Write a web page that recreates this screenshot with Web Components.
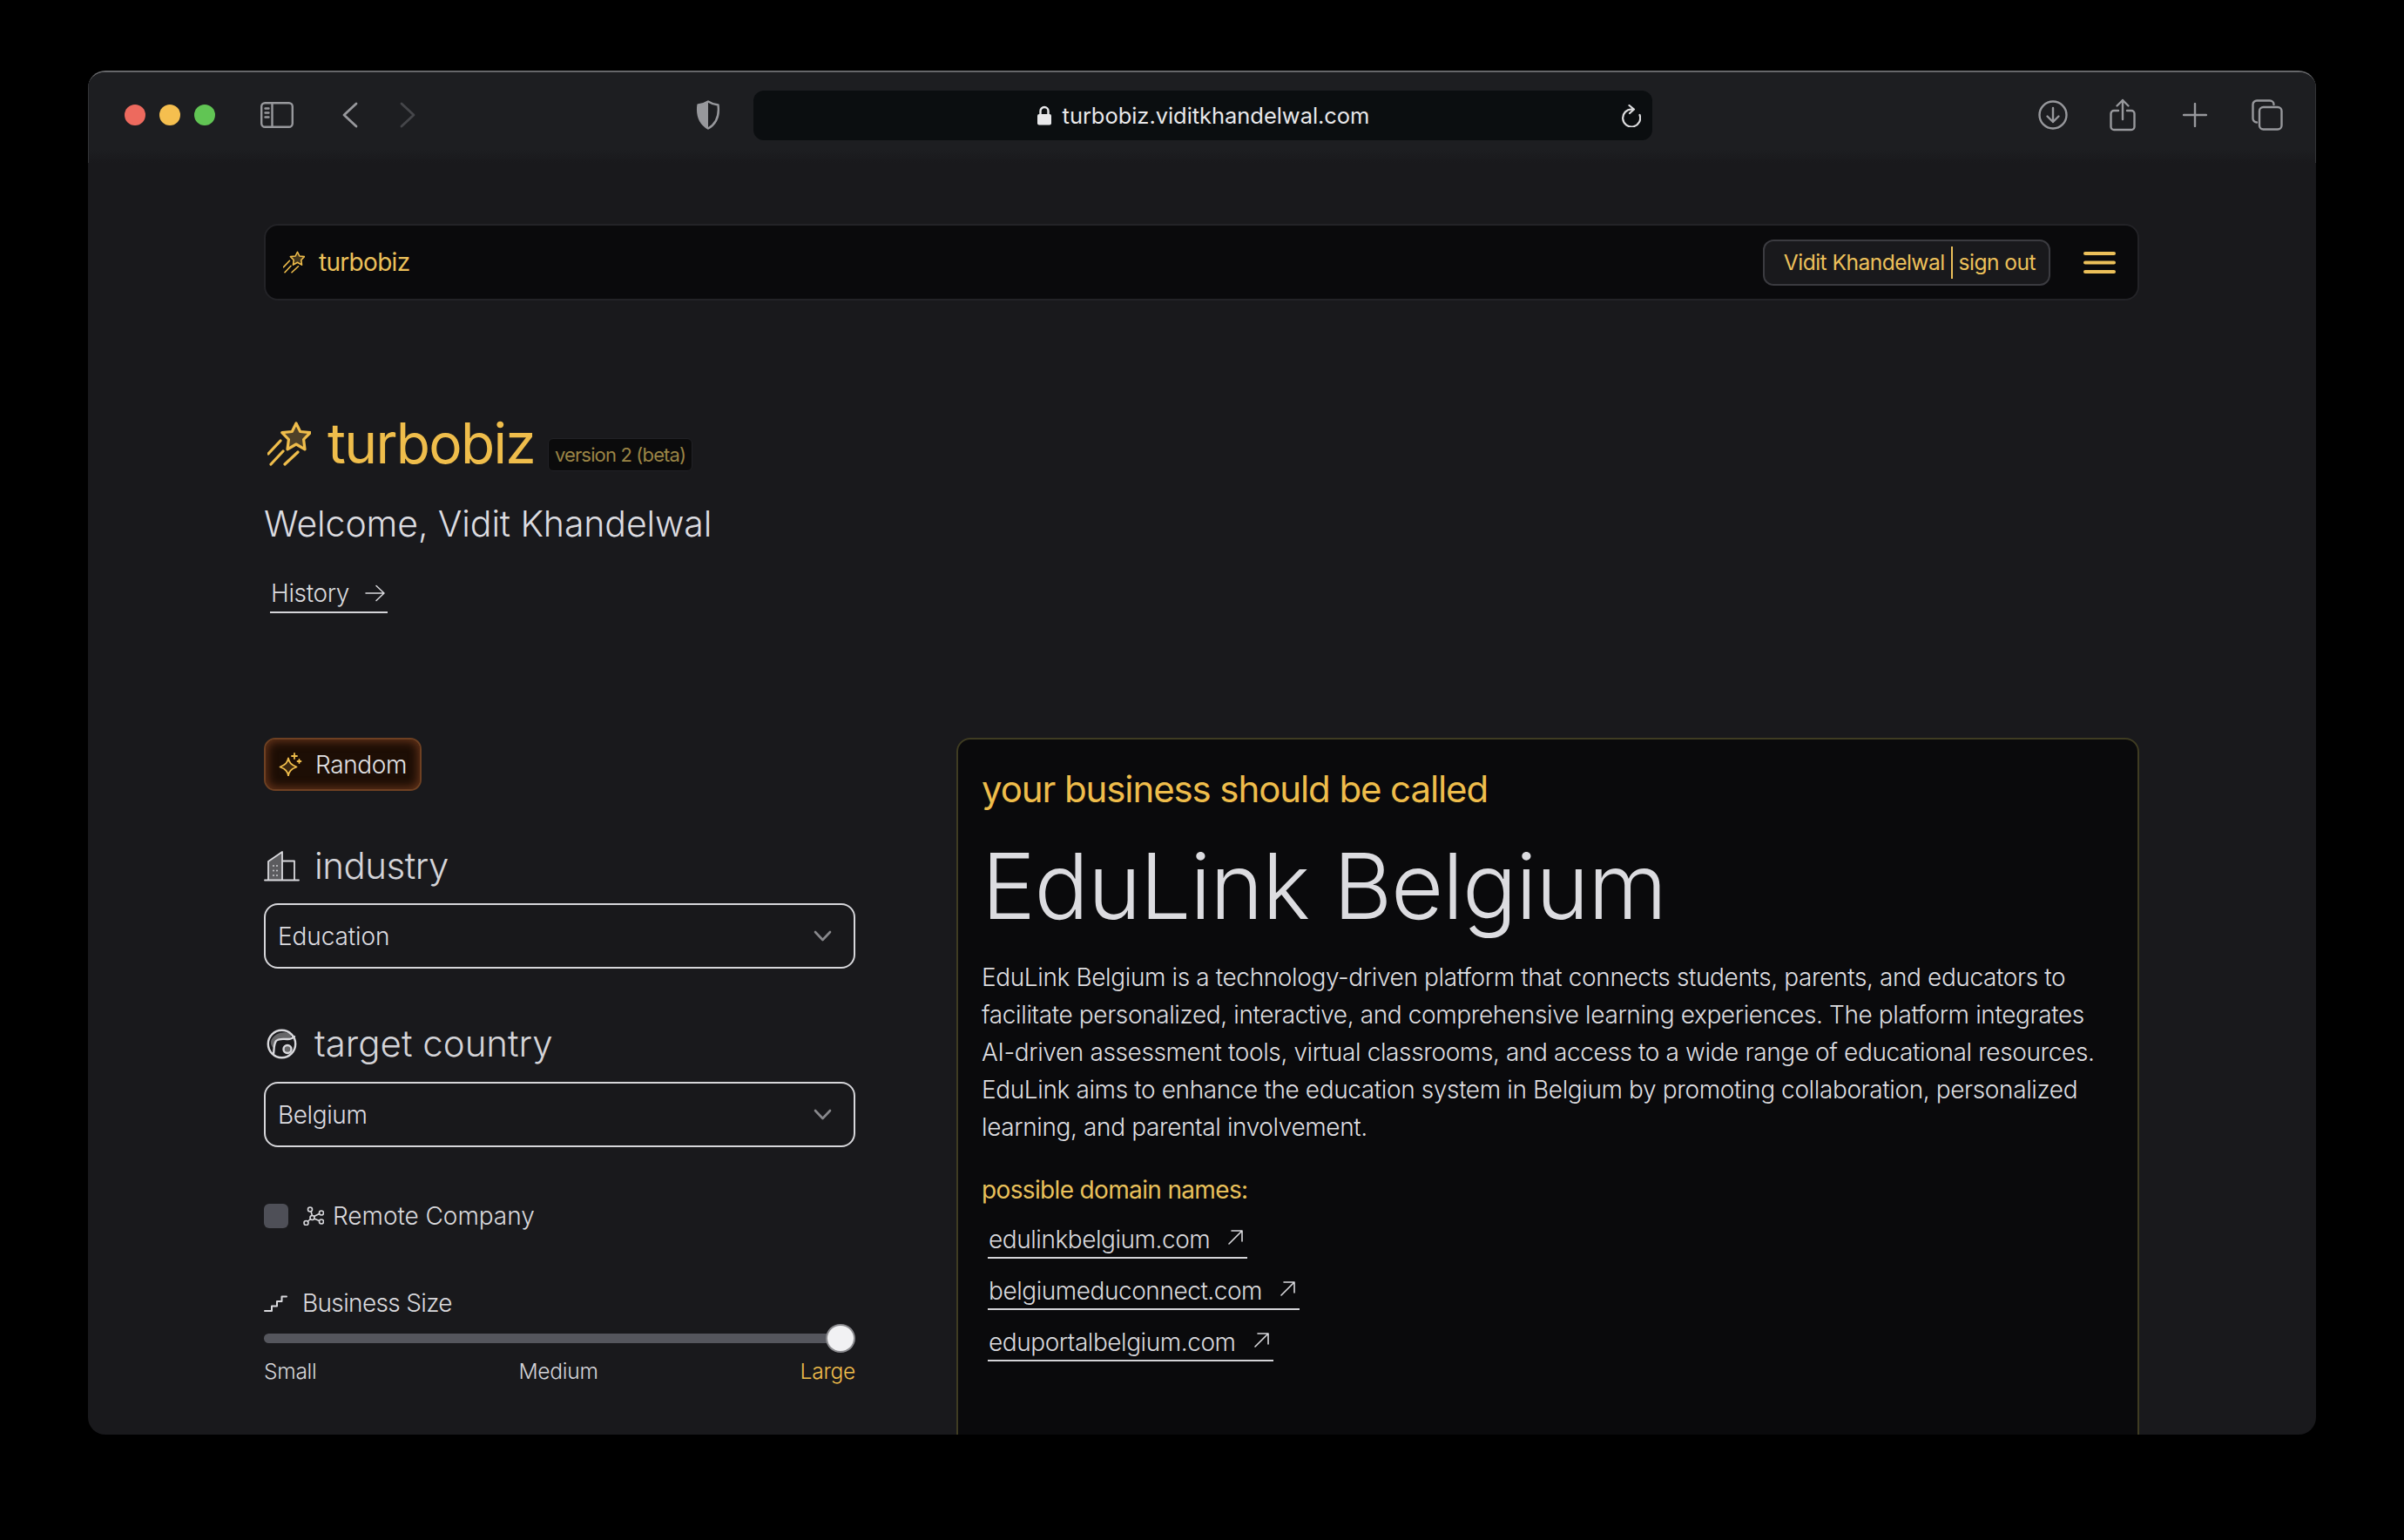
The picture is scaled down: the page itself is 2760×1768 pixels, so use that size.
<!doctype html>
<html>
<head>
<meta charset="utf-8">
<title>turbobiz</title>
<style>
	html, body { margin: 0; background: #000; }
	body { padding: 81px 101px 0; font-family: Inter, "Noto Sans", sans-serif; font-weight: 300; color: #d9d9dd; }
</style>
</head>
<body>
<browser-window>
	<browser-toolbar slot="toolbar" url="turbobiz.viditkhandelwal.com"></browser-toolbar>
	<top-nav></top-nav>
	<app-hero name="Vidit Khandelwal"></app-hero>
	<two-columns>
		<div slot="left">
			<random-button>Random</random-button>
			<field-heading icon="buildings" top="61" spacing="-.5">industry</field-heading>
			<select-box top="18" spacing="-.1">Education</select-box>
			<field-heading icon="globe" top="61" spacing="0">target country</field-heading>
			<select-box top="19" spacing="-.4">Belgium</select-box>
			<remote-check>Remote Company</remote-check>
			<size-slider></size-slider>
		</div>
		<result-card slot="right" name="EduLink Belgium">
			EduLink Belgium is a technology-driven platform that connects students, parents, and educators to facilitate personalized, interactive, and comprehensive learning experiences. The platform integrates AI-driven assessment tools, virtual classrooms, and access to a wide range of educational resources. EduLink aims to enhance the education system in Belgium by promoting collaboration, personalized learning, and parental involvement.
			<domain-link slot="domains" top="23">edulinkbelgium.com</domain-link>
			<domain-link slot="domains" top="20">belgiumeduconnect.com</domain-link>
			<domain-link slot="domains" top="20">eduportalbelgium.com</domain-link>
		</result-card>
	</two-columns>
</browser-window>

<script>
const GOLD = '#efbd4b';

// shooting star logo, used twice at different sizes
const starIcon = (w, h) => `
	<svg width="${w}" height="${h}" viewBox="0 0 50 51" fill="none" stroke="${GOLD}" stroke-width="3.2" stroke-linecap="round" stroke-linejoin="round" style="display:block;flex:none">
		<path fill="${GOLD}" fill-opacity=".25" d="M33 2l4.7 9.5 11.5 1.2-7.6 7.8 1.4 11.3-10-5.8-10 5.8 1.4-11.3-7.6-7.8 11.5-1.2z"/>
		<path d="M1 37L15 22M4 49L18 34M20 49L35 35"/>
	</svg>`;

class BrowserWindow extends HTMLElement {
	constructor() {
		super();
		this.attachShadow({ mode: 'open' });
		this.shadowRoot.innerHTML = `
			<style>
				:host { display: block; width: 2558px; height: 1566px; box-sizing: border-box; overflow: hidden;
					border-radius: 20px; background: #19191c; border-top: 2px solid #66676a; }
				main { padding: 70px 203px 0 202px; }
			</style>
			<slot name="toolbar"></slot>
			<main><slot></slot></main>
		`;
	}
}

class BrowserToolbar extends HTMLElement {
	constructor() {
		super();
		this.attachShadow({ mode: 'open' });
	}

	connectedCallback() {
		const url = this.getAttribute('url');
		this.shadowRoot.innerHTML = `
			<style>
				:host { display: flex; align-items: center; height: 104px; box-sizing: border-box; padding: 0 37px 6px 41px;
					background: linear-gradient(#1d1e21 85%, #19191c); border-left: 1px solid #333437; border-right: 1px solid #333437; }
				svg { display: block; flex: none; fill: none; stroke: #97989c; stroke-width: 2.4; stroke-linecap: round; stroke-linejoin: round; }
				.dots { display: flex; gap: 16px; }
				.dots i { width: 24px; height: 24px; border-radius: 50%; }
				.url { display: flex; align-items: center; justify-content: center; position: relative; width: 1032px; height: 57px; margin-left: 38px;
					border-radius: 12px; background: #0b0e10; color: #e8e8ea; font-size: 25.5px; font-weight: 400; gap: 12px; letter-spacing: -.05px; }
				.reload { position: absolute; right: 13px; top: 16px; }
			</style>
			<div class="dots"><i style="background:#ed6a5e"></i><i style="background:#f5bf4f"></i><i style="background:#61c554"></i></div>
			<svg style="margin-left:52px" width="38" height="30" viewBox="0 0 38 30">
				<rect x="1.2" y="1.2" width="35.6" height="27.6" rx="4"/><path d="M13.5 1.5v27M5.5 7.5h4M5.5 12.5h4M5.5 17.5h4"/>
			</svg>
			<svg style="margin-left:56px" width="18" height="30" viewBox="0 0 18 30"><path d="M16 2L2 15l14 13" stroke-width="2.8"/></svg>
			<svg style="margin-left:48px;stroke:#45464a" width="18" height="30" viewBox="0 0 18 30"><path d="M2 2l14 13L2 28" stroke-width="2.8"/></svg>
			<svg style="margin-left:322px" width="28" height="34" viewBox="0 0 28 34">
				<path d="M14 1.5c3 2 7 3.5 11.5 4 1 8 1 20-11.5 27C2 25.5 1.5 13.5 2.5 5.5 7 5 11 3.500 14 1.500z"/>
				<path fill="#97989c" stroke="none" d="M14 1.500c-3 2-7 3.500-11.500 4-1 8-.5 20 11.500 27z"/>
			</svg>
			<div class="url">
				<svg width="18" height="23" viewBox="0 0 18 23" style="stroke:#e8e8ea">
					<path d="M4.500 10V6.500a4.500 4.500 0 0 1 9 0V10"/><rect x="1" y="10" width="16" height="12.500" rx="2" fill="#e8e8ea" stroke="none"/>
				</svg>
				<span>${url}</span>
				<svg class="reload" width="22" height="26" viewBox="0 0 22 26" style="stroke:#dcdcde">
					<path d="M11.500 5.500A10 10 0 1 0 20.500 12M8.500 1l5.500 4.500-5 4.500" stroke-width="2.200"/>
				</svg>
			</div>
			<svg style="margin-left:auto" width="34" height="34" viewBox="0 0 34 34">
				<circle cx="17" cy="17" r="15.500"/><path d="M17 9v16M10.500 18.500L17 25l6.500-6.500"/>
			</svg>
			<svg style="margin-left:48px" width="30" height="38" viewBox="0 0 30 38">
				<path d="M10 14H5a3.500 3.500 0 0 0-3.500 3.500v15A3.500 3.500 0 0 0 5 36h20a3.500 3.500 0 0 0 3.500-3.500v-15A3.500 3.500 0 0 0 25 14h-5M15 24V2M8.500 8.500L15 2l6.500 6.500"/>
			</svg>
			<svg style="margin-left:54px" width="28" height="28" viewBox="0 0 28 28"><path d="M14 1v26M1 14h26"/></svg>
			<svg style="margin-left:51px" width="36" height="36" viewBox="0 0 36 36">
				<path d="M6 26.500A4.500 4.500 0 0 1 1.500 22V6A4.500 4.500 0 0 1 6 1.500h15A4.500 4.500 0 0 1 25.500 6"/>
				<rect x="9" y="9" width="25.500" height="25.500" rx="4.500"/>
			</svg>
		`;
	}
}

class TopNav extends HTMLElement {
	constructor() {
		super();
		this.attachShadow({ mode: 'open' });
		this.shadowRoot.innerHTML = `
			<style>
				:host { display: flex; align-items: center; height: 88px; box-sizing: border-box; padding: 0 25px 0 20px;
					background: #0a0a0c; border: 2px solid #232327; border-radius: 16px; color: #ecc05a; font-weight: 400; }
				.brand { font-size: 28px; letter-spacing: -.7px; margin-left: 16px; }
				.user { display: flex; align-items: center; margin-left: auto; height: 53px; box-sizing: border-box; padding: 0 15px 0 22px;
					border: 2px solid #3b3b40; border-radius: 12px; background: #19191c; font-size: 24.6px; letter-spacing: -.55px; }
				.user i { width: 2px; height: 37px; background: #ecc05a; margin: 0 7px; }
				svg.menu { display: block; margin-left: 38px; }
			</style>
			${starIcon(25, 26)}
			<span class="brand">turbobiz</span>
			<div class="user"><span>Vidit Khandelwal</span><i></i><span>sign out</span></div>
			<svg class="menu" width="37" height="25" viewBox="0 0 37 25" fill="#ecc05a">
				<rect y="0" width="37" height="4" rx="2"/><rect y="10.500" width="37" height="4" rx="2"/><rect y="21" width="37" height="4" rx="2"/>
			</svg>
		`;
	}
}

class AppHero extends HTMLElement {
	constructor() {
		super();
		this.attachShadow({ mode: 'open' });
	}

	connectedCallback() {
		this.shadowRoot.innerHTML = `
			<style>
				:host { display: block; padding-top: 126px; }
				.title { display: flex; align-items: center; height: 76px; padding-left: 4px; }
				h1 { margin: 0 0 0 19px; font-size: 64px; line-height: 76px; font-weight: 400; color: ${GOLD}; letter-spacing: -1.7px; }
				.badge { margin: 26px 0 0 15px; padding: 0 7px; height: 38px; line-height: 36px; box-sizing: border-box; border: 1px solid #222226; border-radius: 6px;
					background: #0b0b0c; color: #9a8445; font-size: 22px; font-weight: 400; letter-spacing: -.85px; }
				h2 { margin: 29px 0 0; font-size: 41px; line-height: 50px; font-weight: 300; color: #dcdce0; letter-spacing: -.1px; }
				a { display: inline-flex; align-items: center; gap: 18px; margin: 38px 0 0 7px; padding: 0 3px 4px 1px; border-bottom: 2px solid #d4d4d8;
					font-size: 28px; line-height: 34px; color: #d9d9dd; letter-spacing: -.35px; }
				svg { display: block; }
			</style>
			<div class="title">
				${starIcon(50, 51)}
				<h1>turbobiz</h1>
				<span class="badge">version 2 (beta)</span>
			</div>
			<h2>Welcome, ${this.getAttribute('name')}</h2>
			<a>History
				<svg width="23" height="20" viewBox="0 0 23 20" fill="none" stroke="#d9d9dd" stroke-width="1.500" stroke-linecap="round" stroke-linejoin="round"><path d="M1 10h21M13 1.500l9 8.500-9 8.500"/></svg>
			</a>
		`;
	}
}

class TwoColumns extends HTMLElement {
	constructor() {
		super();
		this.attachShadow({ mode: 'open' });
		this.shadowRoot.innerHTML = `
			<style>
				:host { display: grid; grid-template-columns: 679px 1358px; column-gap: 116px; margin-top: 143px; }
			</style>
			<slot name="left"></slot>
			<slot name="right"></slot>
		`;
	}
}

class RandomButton extends HTMLElement {
	constructor() {
		super();
		this.attachShadow({ mode: 'open' });
		this.shadowRoot.innerHTML = `
			<style>
				:host { display: inline-flex; align-items: center; vertical-align: top; width: 181px; height: 61px; box-sizing: border-box; padding-left: 15px; gap: 15px;
					border: 2px solid #6e4022; border-radius: 13px; background: #1d0e05; box-shadow: inset 0 0 11px 2px #65331a;
					font-size: 28px; color: #e2e2e4; letter-spacing: -.4px; }
				svg { display: block; flex: none; }
			</style>
			<svg width="27" height="27" viewBox="0 0 27 27" fill="none" stroke="${GOLD}" stroke-width="1.800" stroke-linecap="round" stroke-linejoin="round">
				<path fill="${GOLD}" fill-opacity=".15" d="M11 6.500c1 5 3 7.500 9.500 10-6.500 2.500-8.500 5-9.500 10-1-5-3-7.500-9.500-10C8 14 10 11.500 11 6.500z"/>
				<path d="M18 1v6M15 4h6M23.500 8v4M21.500 10h4"/>
			</svg>
			<slot></slot>
		`;
	}
}

const fieldIcons = {
	buildings: `<svg width="41" height="35" viewBox="0 0 41 35" fill="none" stroke="#d9d9dd" stroke-width="1.800" stroke-linecap="round" stroke-linejoin="round">
		<path fill="#d9d9dd" fill-opacity=".35" stroke="none" d="M5 12L21 1v32H5z"/>
		<path d="M1 33.500h39M5 33.500V12L21 1v32.500M21 11.500h14v22M11 17v.1M15 17v.1M11 22.500v.1M15 22.500v.1M11 28v.1M15 28v.1"/>
	</svg>`,
	globe: `<svg width="35" height="35" viewBox="0 0 35 35" fill="none" stroke="#d9d9dd" stroke-width="2.400" stroke-linecap="round" stroke-linejoin="round" style="margin-left:3px">
		<path fill="#d9d9dd" fill-opacity=".4" stroke="none" d="M6 12C10 5 20 2 27 6c2 2 2 4-3 5-6 0-11-1-14 3-2 3-2 6-2 8-3-2-4-7-2-10z"/>
		<circle cx="24" cy="23.500" r="4.500" fill="#d9d9dd" fill-opacity=".4"/>
		<circle cx="17.500" cy="17.500" r="15.700"/>
		<path d="M8 29c1-6 0-11 3-15 3-3 7-2 13-2 4 0 6-1 8-3"/>
	</svg>`
};

class FieldHeading extends HTMLElement {
	constructor() {
		super();
		this.attachShadow({ mode: 'open' });
	}

	connectedCallback() {
		this.style.marginTop = this.getAttribute('top') + 'px';
		this.style.letterSpacing = this.getAttribute('spacing') + 'px';
		this.shadowRoot.innerHTML = `
			<style>
				:host { display: flex; align-items: center; height: 50px; font-size: 42px; line-height: 50px; color: #d4d4d8; }
				.icon { width: 58px; flex: none; }
				svg { display: block; }
			</style>
			<div class="icon">${fieldIcons[this.getAttribute('icon')]}</div>
			<slot></slot>
		`;
	}
}

class SelectBox extends HTMLElement {
	constructor() {
		super();
		this.attachShadow({ mode: 'open' });
	}

	connectedCallback() {
		this.style.marginTop = this.getAttribute('top') + 'px';
		this.style.letterSpacing = this.getAttribute('spacing') + 'px';
		this.shadowRoot.innerHTML = `
			<style>
				:host { display: flex; align-items: center; justify-content: space-between; height: 75px; box-sizing: border-box; padding: 0 25px 0 14px;
					border: 2px solid #d6d6da; border-radius: 16px; background: #18181b; font-size: 28px; color: #dcdce0; }
				svg { display: block; }
			</style>
			<slot></slot>
			<svg width="21" height="13" viewBox="0 0 21 13" fill="none" stroke="#88888c" stroke-width="2.600" stroke-linecap="round" stroke-linejoin="round"><path d="M2 2l8.500 9L19 2"/></svg>
		`;
	}
}

class RemoteCheck extends HTMLElement {
	constructor() {
		super();
		this.attachShadow({ mode: 'open' });
		this.shadowRoot.innerHTML = `
			<style>
				:host { display: flex; align-items: center; height: 34px; margin-top: 62px; font-size: 28px; color: #d9d9dd; letter-spacing: -.05px; }
				.box { width: 28px; height: 28px; border-radius: 6px; background: #4e4f57; flex: none; }
				svg { display: block; margin: 0 10px 0 17px; flex: none; }
			</style>
			<div class="box"></div>
			<svg width="24" height="22" viewBox="0 0 24 22" fill="none" stroke="#d9d9dd" stroke-width="1.600">
				<path d="M9 5.500l1.500 5.500M12.500 11.500l6-3M12.500 14l6 2.500M8.500 14.500L5 17.500"/>
				<circle cx="8" cy="3.500" r="2.500"/><circle cx="21" cy="7.500" r="2.500"/><circle cx="21" cy="17.500" r="2.500"/><circle cx="3.500" cy="19" r="2.500"/><circle cx="10.500" cy="13" r="2.500"/>
			</svg>
			<slot></slot>
		`;
	}
}

class SizeSlider extends HTMLElement {
	constructor() {
		super();
		this.attachShadow({ mode: 'open' });
		this.shadowRoot.innerHTML = `
			<style>
				:host { display: block; margin-top: 66px; }
				.label { display: flex; align-items: center; gap: 17px; font-size: 28px; line-height: 34px; color: #d9d9dd; letter-spacing: -.65px; }
				svg { display: block; }
				.track { position: relative; height: 11px; margin: 18px 0 0; border-radius: 6px; background: #55565d; }
				.thumb { position: absolute; right: 0; top: -11px; width: 34px; height: 33px; box-sizing: border-box; border-radius: 50%/50%;
					background: #f1f1f3; border: 2px solid #8a8a8e; }
				.scale { display: flex; justify-content: space-between; margin-top: 16px; font-size: 24.6px; line-height: 32px; color: #d4d4d8; letter-spacing: -.3px; }
				.on { color: ${GOLD}; }
			</style>
			<div class="label">
				<svg width="27" height="19" viewBox="0 0 27 19" fill="none" stroke="#d9d9dd" stroke-width="2" stroke-linecap="round" stroke-linejoin="round">
					<path d="M1 18h8v-5.500h6V7h5.500V1.500H26"/>
				</svg>
				<span>Business Size</span>
			</div>
			<div class="track"><div class="thumb"></div></div>
			<div class="scale"><span>Small</span><span>Medium</span><span class="on">Large</span></div>
		`;
	}
}

class ResultCard extends HTMLElement {
	constructor() {
		super();
		this.attachShadow({ mode: 'open' });
	}

	connectedCallback() {
		this.shadowRoot.innerHTML = `
			<style>
				:host { display: block; box-sizing: border-box; height: 900px; padding: 32px 28px 0 27px; border: 2px solid #3f3c22; border-radius: 16px; background: #0a0a0c; }
				.lead { font-size: 42px; line-height: 50px; font-weight: 400; color: ${GOLD}; letter-spacing: -1.1px; }
				h1 { margin: 24px 0 0; font-size: 104px; line-height: 124px; font-weight: 300; color: #dcdce0; letter-spacing: -1.3px; }
				p { margin: 22px 0 0; font-size: 28px; line-height: 43px; font-weight: 350; color: #dedee0; letter-spacing: -.38px; }
				.sub { margin-top: 33px; font-size: 28px; line-height: 34px; font-weight: 400; color: #e8c05a; letter-spacing: -.65px; }
				.domains { display: flex; flex-direction: column; align-items: flex-start; }
			</style>
			<div class="lead">your business should be called</div>
			<h1>${this.getAttribute('name')}</h1>
			<p><slot></slot></p>
			<div class="sub">possible domain names:</div>
			<div class="domains"><slot name="domains"></slot></div>
		`;
	}
}

class DomainLink extends HTMLElement {
	constructor() {
		super();
		this.attachShadow({ mode: 'open' });
	}

	connectedCallback() {
		this.style.marginTop = this.getAttribute('top') + 'px';
		this.shadowRoot.innerHTML = `
			<style>
				:host { display: inline-flex; align-items: center; gap: 21px; margin-left: 7px; padding: 0 5px 3px 1px; border-bottom: 2px solid #d4d4d8;
					font-size: 28px; line-height: 34px; color: #d9d9dd; letter-spacing: -.45px; }
				svg { display: block; margin-top: -6px; }
			</style>
			<slot></slot>
			<svg width="17" height="17" viewBox="0 0 17 17" fill="none" stroke="#d9d9dd" stroke-width="1.600" stroke-linecap="round" stroke-linejoin="round"><path d="M1 16L16 1M4 1h12v12"/></svg>
		`;
	}
}

customElements.define('browser-window', BrowserWindow);
customElements.define('browser-toolbar', BrowserToolbar);
customElements.define('top-nav', TopNav);
customElements.define('app-hero', AppHero);
customElements.define('two-columns', TwoColumns);
customElements.define('random-button', RandomButton);
customElements.define('field-heading', FieldHeading);
customElements.define('select-box', SelectBox);
customElements.define('remote-check', RemoteCheck);
customElements.define('size-slider', SizeSlider);
customElements.define('result-card', ResultCard);
customElements.define('domain-link', DomainLink);
</script>
</body>
</html>
